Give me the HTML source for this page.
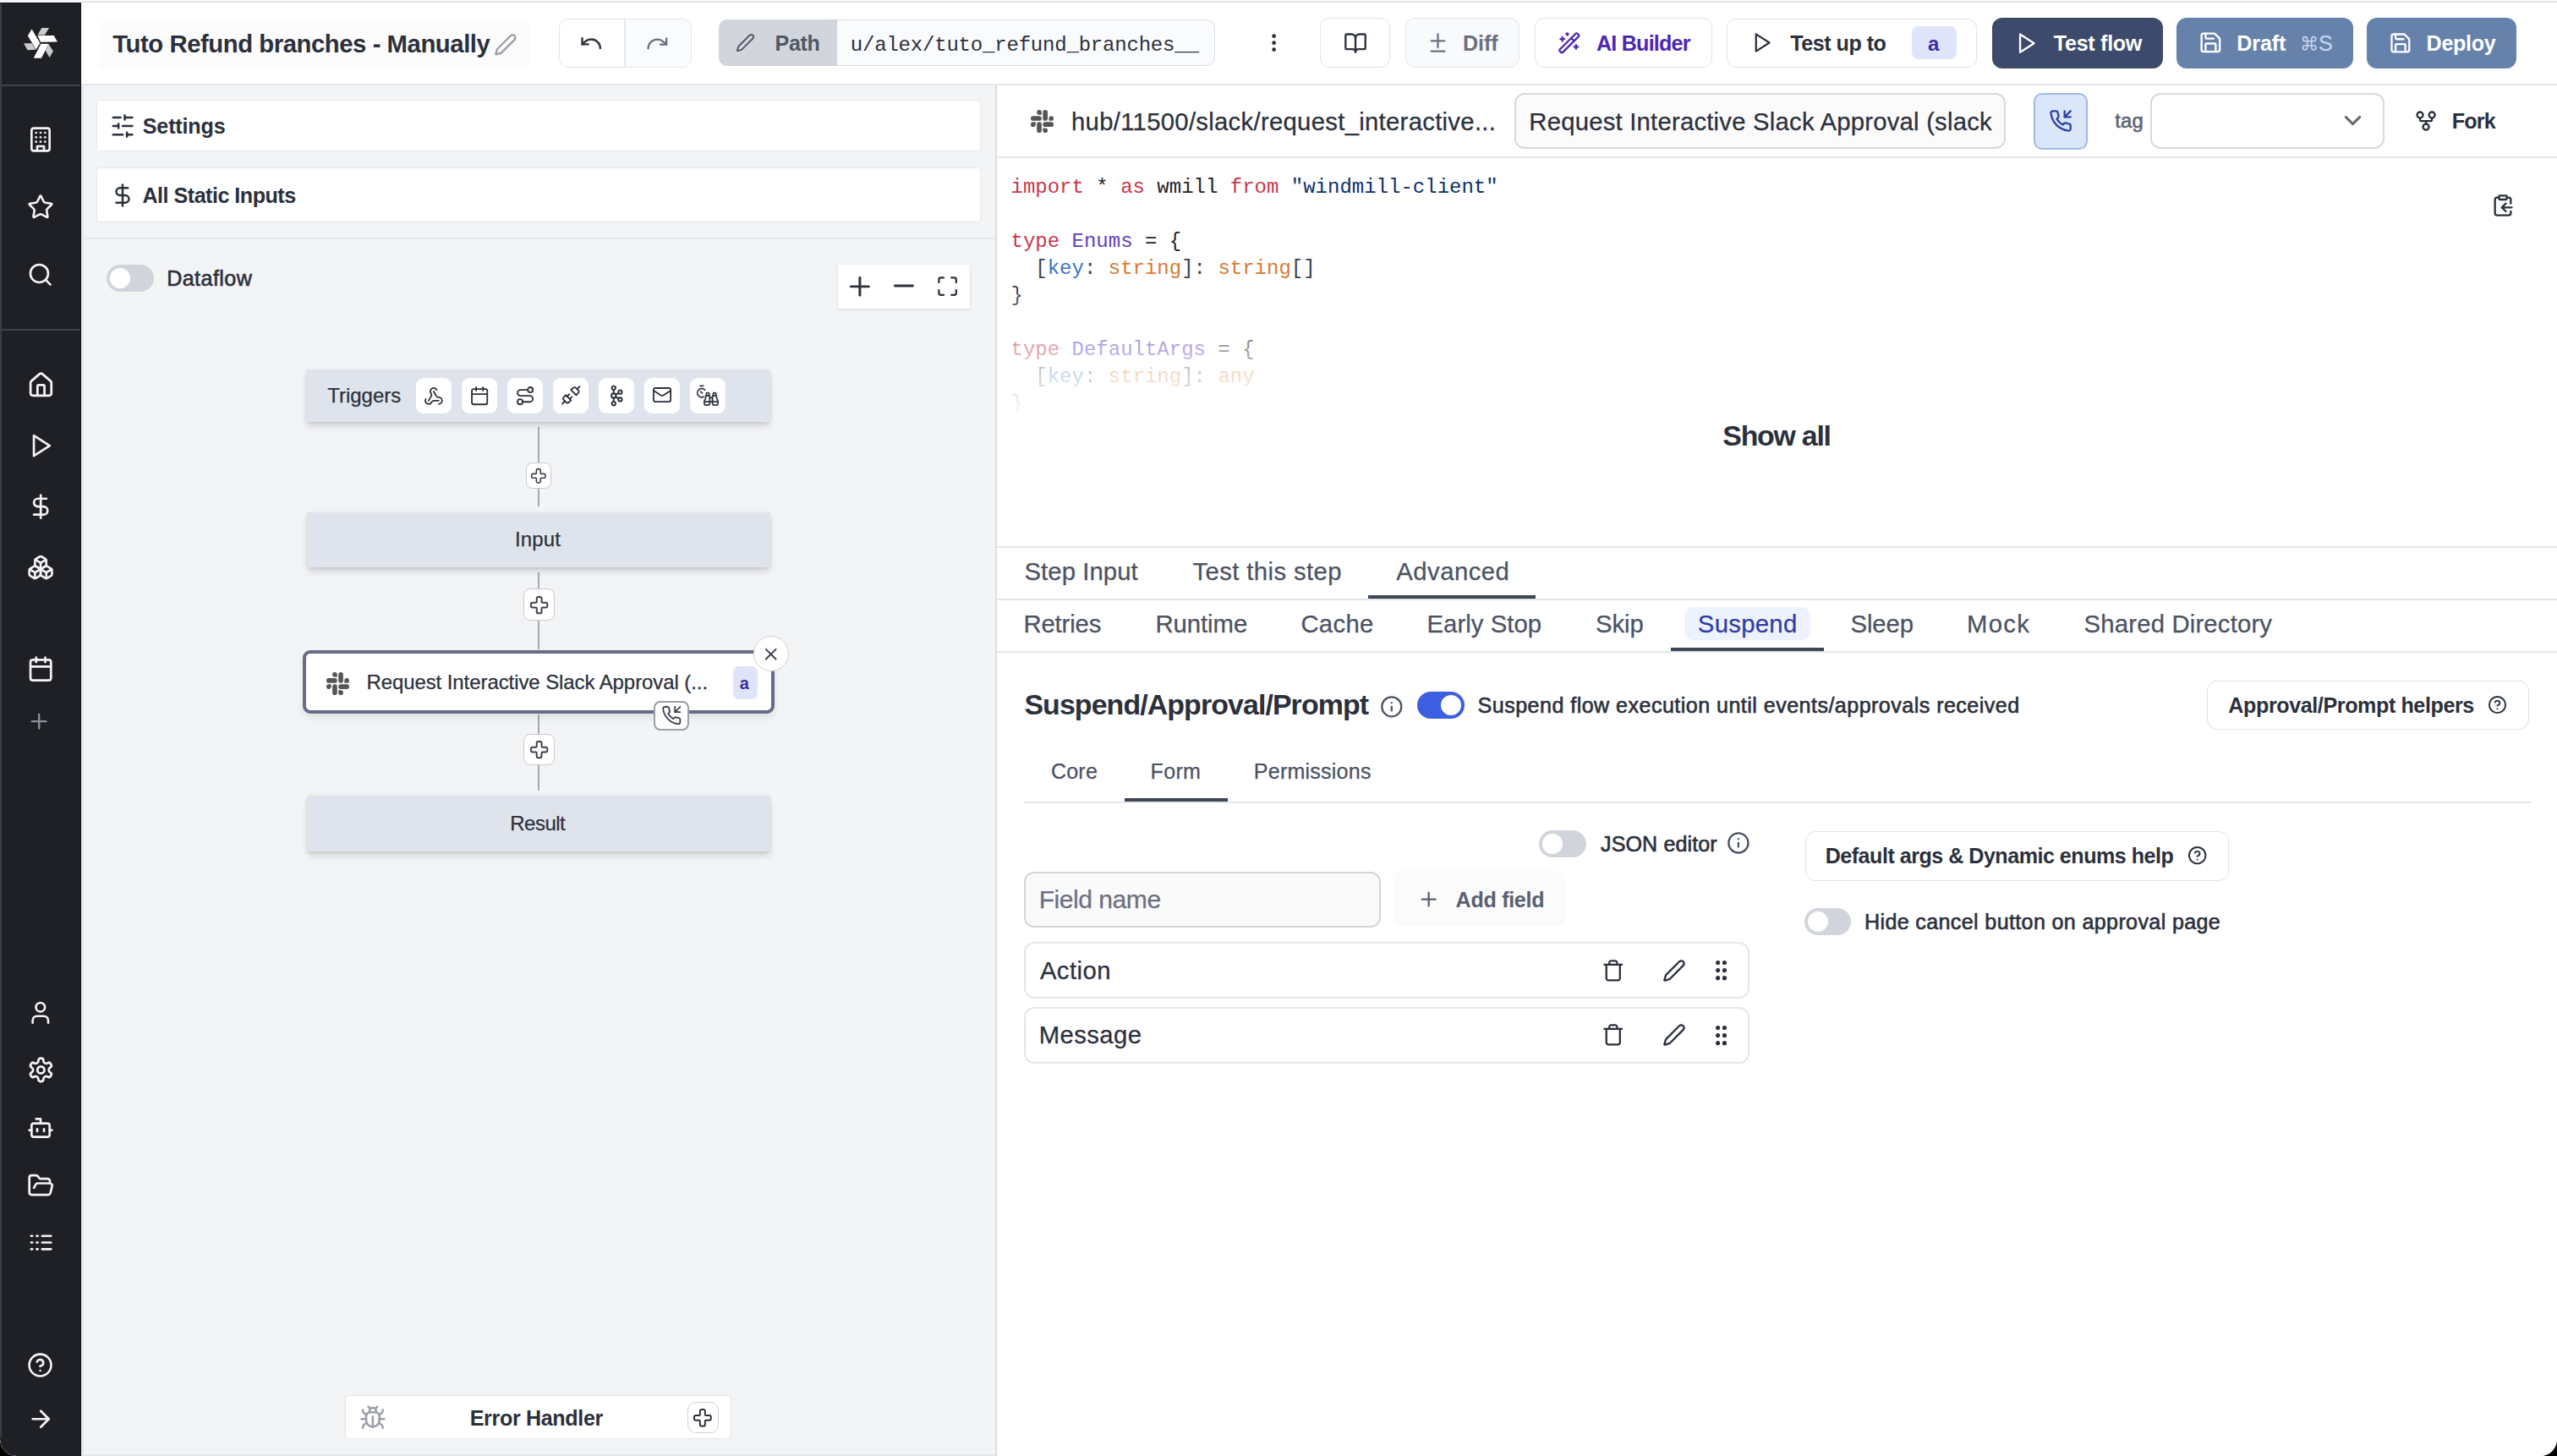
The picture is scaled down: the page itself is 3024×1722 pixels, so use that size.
<!DOCTYPE html>
<html><head><meta charset="utf-8"><title>Windmill flow editor</title>
<style>
html,body{margin:0;padding:0;background:#000;}
body{width:3024px;height:1722px;overflow:hidden;position:relative;font-family:'Liberation Sans',sans-serif;}
#w{position:absolute;left:0;top:0;width:3024px;height:1722px;background:#fff;border-radius:0 0 20px 20px;overflow:hidden;}
#w>div,#w>svg{position:absolute;}
.t{white-space:pre;}
@media (max-width:1700px){html{zoom:0.5;}}
</style></head><body><div id="w">
<div style="left:0px;top:0px;width:3024px;height:3px;background:#f7f7f9"></div>
<div style="left:96px;top:2px;width:2928px;height:1px;background:#d6d6da"></div>
<div style="left:0px;top:3px;width:96px;height:1719px;background:#1f2025;border-bottom-left-radius:20px"></div>
<div style="left:0px;top:3px;width:96px;height:1px;background:#0f1013"></div>
<div style="left:0px;top:4px;width:1.5px;height:1696px;background:#3b3c42"></div>
<div style="left:94.5px;top:4px;width:1.5px;height:1718px;background:#131418"></div>
<div style="left:0px;top:100px;width:95px;height:2px;background:#404148"></div>
<div style="left:0px;top:389px;width:95px;height:2px;background:#404148"></div>
<svg style="left:0;top:0;width:96px;height:100px" viewBox="0 0 96 100"><polygon fill="#c9cacd" points="44.5,41.3 49.3,33.1 58,33.1 52.9,41.6"/><polygon fill="#c9cacd" points="28.1,51.2 37.6,51.2 42.3,58.8 32.5,59.3"/><polygon fill="#c9cacd" points="53.7,59.9 57.5,52 62.9,60.5 58.6,68.1"/><polygon fill="#ffffff" points="44.4,42.1 63.7,42.1 67.9,49.6 48,49.8"/><polygon fill="#ffffff" points="32.8,42.2 37.6,34.6 47.4,51.1 42.6,58.5"/><polygon fill="#ffffff" points="39.8,68.8 49,68.8 57.5,52 48.3,51.7"/></svg>
<svg style="left:32.01px;top:149.16px;width:31.98px;height:31.98px" viewBox="0 0 24 24" fill="none" stroke="#f4f4f5" stroke-width="2" stroke-linecap="round" stroke-linejoin="round"><rect width="16" height="20" x="4" y="2" rx="2" ry="2"/><path d="M9 22v-4h6v4"/><path d="M8 6h.01"/><path d="M16 6h.01"/><path d="M12 6h.01"/><path d="M12 10h.01"/><path d="M12 14h.01"/><path d="M16 10h.01"/><path d="M16 14h.01"/><path d="M8 10h.01"/><path d="M8 14h.01"/></svg>
<svg style="left:32.02px;top:228.83px;width:31.86px;height:31.86px" viewBox="0 0 24 24" fill="none" stroke="#f4f4f5" stroke-width="2" stroke-linecap="round" stroke-linejoin="round"><path d="M11.525 2.295a.53.53 0 0 1 .95 0l2.31 4.679a2.123 2.123 0 0 0 1.595 1.16l5.166.756a.53.53 0 0 1 .294.904l-3.736 3.638a2.123 2.123 0 0 0-.611 1.878l.882 5.14a.53.53 0 0 1-.771.56l-4.618-2.428a2.122 2.122 0 0 0-1.973 0L6.396 21.01a.53.53 0 0 1-.77-.56l.881-5.139a2.122 2.122 0 0 0-.611-1.879L2.16 9.795a.53.53 0 0 1 .294-.906l5.165-.755a2.122 2.122 0 0 0 1.597-1.16z"/></svg>
<svg style="left:32.05px;top:309.2px;width:31.5px;height:31.5px" viewBox="0 0 24 24" fill="none" stroke="#f4f4f5" stroke-width="2" stroke-linecap="round" stroke-linejoin="round"><circle cx="11" cy="11" r="8"/><path d="m21 21-4.3-4.3"/></svg>
<svg style="left:31.7px;top:438.58px;width:32.9px;height:32.9px" viewBox="0 0 24 24" fill="none" stroke="#f4f4f5" stroke-width="2" stroke-linecap="round" stroke-linejoin="round"><path d="M15 21v-8a1 1 0 0 0-1-1h-4a1 1 0 0 0-1 1v8"/><path d="M3 10a2 2 0 0 1 .709-1.528l7-5.999a2 2 0 0 1 2.582 0l7 5.999A2 2 0 0 1 21 10v9a2 2 0 0 1-2 2H5a2 2 0 0 1-2-2z"/></svg>
<svg style="left:31.81px;top:511.3px;width:32.2px;height:32.2px" viewBox="0 0 24 24" fill="none" stroke="#f4f4f5" stroke-width="2" stroke-linecap="round" stroke-linejoin="round"><polygon points="6 3 20 12 6 21 6 3"/></svg>
<svg style="left:31.91px;top:582.91px;width:32.38px;height:32.38px" viewBox="0 0 24 24" fill="none" stroke="#f4f4f5" stroke-width="2" stroke-linecap="round" stroke-linejoin="round"><line x1="12" x2="12" y1="2" y2="22"/><path d="M17 5H9.5a3.5 3.5 0 0 0 0 7h5a3.5 3.5 0 0 1 0 7H6"/></svg>
<svg style="left:32.04px;top:654.74px;width:32.12px;height:32.12px" viewBox="0 0 24 24" fill="none" stroke="#f4f4f5" stroke-width="2" stroke-linecap="round" stroke-linejoin="round"><path d="M2.97 12.92A2 2 0 0 0 2 14.63v3.24a2 2 0 0 0 .97 1.71l3 1.8a2 2 0 0 0 2.06 0L12 19v-5.5l-5-3-4.03 2.42Z"/><path d="m7 16.5-4.74-2.85"/><path d="m7 16.5 5-3"/><path d="M7 16.5v5.17"/><path d="M12 13.5V19l3.97 2.38a2 2 0 0 0 2.06 0l3-1.8a2 2 0 0 0 .97-1.71v-3.24a2 2 0 0 0-.97-1.71L17 10.5l-5 3Z"/><path d="m17 16.5-5-3"/><path d="m17 16.5 4.74-2.85"/><path d="M17 16.5v5.17"/><path d="M7.97 4.42A2 2 0 0 0 7 6.13v4.37l5 3 5-3V6.13a2 2 0 0 0-.97-1.71l-3-1.8a2 2 0 0 0-2.06 0l-3 1.8Z"/><path d="M12 8 7.26 5.15"/><path d="m12 8 4.74-2.85"/><path d="M12 13.5V8"/></svg>
<svg style="left:31.99px;top:775.34px;width:32.32px;height:32.32px" viewBox="0 0 24 24" fill="none" stroke="#f4f4f5" stroke-width="2" stroke-linecap="round" stroke-linejoin="round"><path d="M8 2v4"/><path d="M16 2v4"/><rect width="18" height="18" x="3" y="4" rx="2"/><path d="M3 10h18"/></svg>
<svg style="left:31.85px;top:1182.3px;width:31.6px;height:31.6px" viewBox="0 0 24 24" fill="none" stroke="#f4f4f5" stroke-width="2" stroke-linecap="round" stroke-linejoin="round"><circle cx="12" cy="7" r="4"/><path d="M19 21v-2a4 4 0 0 0-4-4H9a4 4 0 0 0-4 4v2"/></svg>
<svg style="left:31.52px;top:1249.27px;width:32.75px;height:32.75px" viewBox="0 0 24 24" fill="none" stroke="#f4f4f5" stroke-width="2" stroke-linecap="round" stroke-linejoin="round"><path d="M12.22 2h-.44a2 2 0 0 0-2 2v.18a2 2 0 0 1-1 1.73l-.43.25a2 2 0 0 1-2 0l-.15-.08a2 2 0 0 0-2.73.73l-.22.38a2 2 0 0 0 .73 2.73l.15.1a2 2 0 0 1 1 1.72v.51a2 2 0 0 1-1 1.74l-.15.09a2 2 0 0 0-.73 2.73l.22.38a2 2 0 0 0 2.73.73l.15-.08a2 2 0 0 1 2 0l.43.25a2 2 0 0 1 1 1.73V20a2 2 0 0 0 2 2h.44a2 2 0 0 0 2-2v-.18a2 2 0 0 1 1-1.73l.43-.25a2 2 0 0 1 2 0l.15.08a2 2 0 0 0 2.73-.73l.22-.39a2 2 0 0 0-.73-2.73l-.15-.08a2 2 0 0 1-1-1.74v-.5a2 2 0 0 1 1-1.74l.15-.09a2 2 0 0 0 .73-2.73l-.22-.38a2 2 0 0 0-2.73-.73l-.15.08a2 2 0 0 1-2 0l-.43-.25a2 2 0 0 1-1-1.73V4a2 2 0 0 0-2-2z"/><circle cx="12" cy="12" r="3"/></svg>
<svg style="left:31.88px;top:1317.68px;width:32.04px;height:32.04px" viewBox="0 0 24 24" fill="none" stroke="#f4f4f5" stroke-width="2" stroke-linecap="round" stroke-linejoin="round"><path d="M12 8V4H8"/><rect width="16" height="12" x="4" y="8" rx="2"/><path d="M2 14h2"/><path d="M20 14h2"/><path d="M15 13v2"/><path d="M9 13v2"/></svg>
<svg style="left:31.63px;top:1386.06px;width:32.44px;height:32.44px" viewBox="0 0 24 24" fill="none" stroke="#f4f4f5" stroke-width="2" stroke-linecap="round" stroke-linejoin="round"><path d="m6 14 1.5-2.9A2 2 0 0 1 9.24 10H20a2 2 0 0 1 1.94 2.5l-1.54 6a2 2 0 0 1-1.95 1.5H4a2 2 0 0 1-2-2V5a2 2 0 0 1 2-2h3.9a2 2 0 0 1 1.69.9l.81 1.2a2 2 0 0 0 1.67.9H18a2 2 0 0 1 2 2v2"/></svg>
<svg style="left:32.53px;top:1454.43px;width:31.15px;height:31.15px" viewBox="0 0 24 24" fill="none" stroke="#f4f4f5" stroke-width="2" stroke-linecap="round" stroke-linejoin="round"><path d="M13 12h8"/><path d="M13 18h8"/><path d="M13 6h8"/><path d="M3 12h1"/><path d="M3 18h1"/><path d="M3 6h1"/><path d="M8 12h1"/><path d="M8 18h1"/><path d="M8 6h1"/></svg>
<svg style="left:32.4px;top:1598.9px;width:31.09px;height:31.09px" viewBox="0 0 24 24" fill="none" stroke="#f4f4f5" stroke-width="2" stroke-linecap="round" stroke-linejoin="round"><circle cx="12" cy="12" r="10"/><path d="M9.09 9a3 3 0 0 1 5.83 1c0 2-3 3-3 3"/><path d="M12 17h.01"/></svg>
<svg style="left:31.91px;top:1661.56px;width:32.47px;height:32.47px" viewBox="0 0 24 24" fill="none" stroke="#f4f4f5" stroke-width="2" stroke-linecap="round" stroke-linejoin="round"><path d="M5 12h14"/><path d="m12 5 7 7-7 7"/></svg>
<svg style="left:32.11px;top:839.26px;width:28.27px;height:28.27px" viewBox="0 0 24 24" fill="none" stroke="#8e9097" stroke-width="2" stroke-linecap="round" stroke-linejoin="round"><path d="M5 12h14"/><path d="M12 5v14"/></svg>
<div style="left:96px;top:3px;width:2928px;height:96px;background:#fff"></div>
<div style="left:96px;top:99px;width:2928px;height:2px;background:#e4e6e9"></div>
<div style="left:116.5px;top:24px;width:510.5px;height:57.5px;background:#fcfcfd;border-radius:6px"></div>
<div class="t" style="left:133.3px;top:37px;font-family:'Liberation Sans',sans-serif;font-size:29.3px;line-height:29.3px;letter-spacing:-0.453px;color:#2b303b;font-weight:700;">Tuto Refund branches - Manually</div>
<svg style="left:583.87px;top:39.12px;width:27.76px;height:27.76px" viewBox="0 0 24 24" fill="none" stroke="#9b9ea4" stroke-width="2" stroke-linecap="round" stroke-linejoin="round"><path d="M21.174 6.812a1 1 0 0 0-3.986-3.987L3.842 16.174a2 2 0 0 0-.5.83l-1.321 4.352a.5.5 0 0 0 .623.622l4.353-1.32a2 2 0 0 0 .83-.497z"/></svg>
<div style="left:661.3px;top:21.6px;width:156.3px;height:58.6px;border:1.5px solid #e3e5e8;border-radius:11px;background:#fff;box-sizing:border-box"></div>
<div style="left:739.5px;top:23px;width:76.5px;height:56px;background:#fafbfc;border-radius:0 10px 10px 0"></div>
<div style="left:738.2px;top:22.5px;width:1.5px;height:57px;background:#e6e8eb"></div>
<svg style="left:685.3px;top:36.7px;width:28.4px;height:28.4px" viewBox="0 0 24 24" fill="none" stroke="#2b303b" stroke-width="2" stroke-linecap="round" stroke-linejoin="round"><path d="M3 7v6h6"/><path d="M21 17a9 9 0 0 0-9-9 9 9 0 0 0-6 2.3L3 13"/></svg>
<svg style="left:763.42px;top:36.52px;width:28.76px;height:28.76px" viewBox="0 0 24 24" fill="none" stroke="#6b7080" stroke-width="2" stroke-linecap="round" stroke-linejoin="round"><path d="M21 7v6h-6"/><path d="M3 17a9 9 0 0 1 9-9 9 9 0 0 1 6 2.3l3 2.7"/></svg>
<div style="left:850px;top:23.2px;width:586.5px;height:55.3px;border:1.5px solid #d9dbdf;border-radius:10px;background:#fafbfc;box-sizing:border-box"></div>
<div style="left:850px;top:23.2px;width:140px;height:55.3px;background:#d2d6dc;border-radius:10px 0 0 10px"></div>
<svg style="left:869.99px;top:39.39px;width:23.02px;height:23.02px" viewBox="0 0 24 24" fill="none" stroke="#505766" stroke-width="2" stroke-linecap="round" stroke-linejoin="round"><path d="M21.174 6.812a1 1 0 0 0-3.986-3.987L3.842 16.174a2 2 0 0 0-.5.83l-1.321 4.352a.5.5 0 0 0 .623.622l4.353-1.32a2 2 0 0 0 .83-.497z"/></svg>
<div class="t" style="left:916.6px;top:39.2px;font-family:'Liberation Sans',sans-serif;font-size:25.1px;line-height:25.1px;letter-spacing:-0.4px;color:#505766;font-weight:700;">Path</div>
<div class="t" style="left:1005.8px;top:42px;font-family:'Liberation Mono',monospace;font-size:24px;line-height:24px;letter-spacing:-0.2px;color:#2b303b;">u/alex/tuto_refund_branches__</div>
<svg style="left:1493.35px;top:37.25px;width:27.3px;height:27.3px" viewBox="0 0 24 24" fill="none" stroke="#2b303b" stroke-width="2.2" stroke-linecap="round" stroke-linejoin="round"><circle cx="12" cy="12" r="1"/><circle cx="12" cy="5" r="1"/><circle cx="12" cy="19" r="1"/></svg>
<div style="left:1561.4px;top:21.4px;width:82.4px;height:58.6px;border:1.5px solid #e3e5e8;border-radius:11px;background:#fff;box-sizing:border-box"></div>
<svg style="left:1588.96px;top:36.91px;width:28.09px;height:28.09px" viewBox="0 0 24 24" fill="none" stroke="#2b303b" stroke-width="2" stroke-linecap="round" stroke-linejoin="round"><path d="M12 7v14"/><path d="M3 18a1 1 0 0 1-1-1V4a1 1 0 0 1 1-1h5a4 4 0 0 1 4 4 4 4 0 0 1 4-4h5a1 1 0 0 1 1 1v13a1 1 0 0 1-1 1h-6a3 3 0 0 0-3 3 3 3 0 0 0-3-3z"/></svg>
<div style="left:1661.5px;top:21.4px;width:135.5px;height:58.6px;border:1.5px solid #e3e5e8;border-radius:11px;background:#f9fafb;box-sizing:border-box"></div>
<svg style="left:1687.47px;top:37.37px;width:27.06px;height:27.06px" viewBox="0 0 24 24" fill="none" stroke="#6b7080" stroke-width="2" stroke-linecap="round" stroke-linejoin="round"><path d="M12 3v14"/><path d="M5 10h14"/><path d="M5 21h14"/></svg>
<div class="t" style="left:1730px;top:39.2px;font-family:'Liberation Sans',sans-serif;font-size:25.1px;line-height:25.1px;letter-spacing:-0.067px;color:#6b7080;font-weight:700;">Diff</div>
<div style="left:1814.6px;top:21.4px;width:210.8px;height:58.6px;border:1.5px solid #e3e5e8;border-radius:11px;background:#fff;box-sizing:border-box"></div>
<svg style="left:1841.92px;top:37.07px;width:27.65px;height:27.65px" viewBox="0 0 24 24" fill="none" stroke="#4d27b3" stroke-width="2" stroke-linecap="round" stroke-linejoin="round"><path d="m21.64 3.64-1.28-1.28a1.21 1.21 0 0 0-1.72 0L2.36 18.64a1.21 1.21 0 0 0 0 1.72l1.28 1.28a1.2 1.2 0 0 0 1.72 0L21.64 5.36a1.2 1.2 0 0 0 0-1.72"/><path d="m14 7 3 3"/><path d="M5 6v4"/><path d="M19 14v4"/><path d="M10 2v2"/><path d="M7 8H3"/><path d="M21 16h-4"/><path d="M11 3H9"/></svg>
<div class="t" style="left:1888px;top:39.2px;font-family:'Liberation Sans',sans-serif;font-size:25.1px;line-height:25.1px;letter-spacing:-0.778px;color:#4d27b3;font-weight:700;">AI Builder</div>
<div style="left:2042px;top:21.6px;width:296.4px;height:58px;border:1.5px solid #e3e5e8;border-radius:11px;background:#fff;box-sizing:border-box"></div>
<svg style="left:2070.34px;top:37.37px;width:27.06px;height:27.06px" viewBox="0 0 24 24" fill="none" stroke="#2b303b" stroke-width="2" stroke-linecap="round" stroke-linejoin="round"><polygon points="6 3 20 12 6 21 6 3"/></svg>
<div class="t" style="left:2117.3px;top:38.7px;font-family:'Liberation Sans',sans-serif;font-size:25.1px;line-height:25.1px;letter-spacing:-0.489px;color:#2b303b;font-weight:700;">Test up to</div>
<div style="left:2261px;top:31.3px;width:52.5px;height:39.1px;background:#e0e4fb;border-radius:8px"></div>
<div class="t" style="left:2280px;top:39.7px;font-family:'Liberation Sans',sans-serif;font-size:24px;line-height:24px;letter-spacing:0.0px;color:#3a2fa0;font-weight:700;">a</div>
<div style="left:2356px;top:21px;width:201.8px;height:59.7px;background:#3d4a6b;border-radius:12px"></div>
<svg style="left:2381.82px;top:36.75px;width:28.3px;height:28.3px" viewBox="0 0 24 24" fill="none" stroke="#ffffff" stroke-width="2" stroke-linecap="round" stroke-linejoin="round"><polygon points="6 3 20 12 6 21 6 3"/></svg>
<div class="t" style="left:2428.8px;top:38.7px;font-family:'Liberation Sans',sans-serif;font-size:25.1px;line-height:25.1px;letter-spacing:-0.288px;color:#ffffff;font-weight:700;">Test flow</div>
<div style="left:2574px;top:21.1px;width:209px;height:59.5px;background:#6682ab;border-radius:12px"></div>
<svg style="left:2599.63px;top:36.48px;width:28.74px;height:28.74px" viewBox="0 0 24 24" fill="none" stroke="#ffffff" stroke-width="2" stroke-linecap="round" stroke-linejoin="round"><path d="M15.2 3a2 2 0 0 1 1.4.6l3.8 3.8a2 2 0 0 1 .6 1.4V19a2 2 0 0 1-2 2H5a2 2 0 0 1-2-2V5a2 2 0 0 1 2-2z"/><path d="M17 21v-7a1 1 0 0 0-1-1H8a1 1 0 0 0-1 1v7"/><path d="M7 3v4a1 1 0 0 0 1 1h7"/></svg>
<div class="t" style="left:2645.3px;top:38.7px;font-family:'Liberation Sans',sans-serif;font-size:25.1px;line-height:25.1px;letter-spacing:-0.15px;color:#ffffff;font-weight:700;">Draft</div>
<svg style="left:2721.3px;top:41.3px;width:20.4px;height:20.4px" viewBox="0 0 24 24" fill="none" stroke="#c5d3ec" stroke-width="2" stroke-linecap="round" stroke-linejoin="round"><path d="M15 6v12a3 3 0 1 0 3-3H6a3 3 0 1 0 3 3V6a3 3 0 1 0-3 3h12a3 3 0 1 0-3-3"/></svg>
<div class="t" style="left:2742px;top:38.7px;font-family:'Liberation Sans',sans-serif;font-size:25.1px;line-height:25.1px;letter-spacing:0.0px;color:#c5d3ec;-webkit-text-stroke:0.25px currentColor;">S</div>
<div style="left:2799px;top:20.9px;width:177px;height:59.9px;background:#6682ab;border-radius:12px"></div>
<svg style="left:2825.26px;top:37.11px;width:27.78px;height:27.78px" viewBox="0 0 24 24" fill="none" stroke="#ffffff" stroke-width="2" stroke-linecap="round" stroke-linejoin="round"><path d="M15.2 3a2 2 0 0 1 1.4.6l3.8 3.8a2 2 0 0 1 .6 1.4V19a2 2 0 0 1-2 2H5a2 2 0 0 1-2-2V5a2 2 0 0 1 2-2z"/><path d="M17 21v-7a1 1 0 0 0-1-1H8a1 1 0 0 0-1 1v7"/><path d="M7 3v4a1 1 0 0 0 1 1h7"/></svg>
<div class="t" style="left:2869.6px;top:38.8px;font-family:'Liberation Sans',sans-serif;font-size:25.1px;line-height:25.1px;letter-spacing:-0.32px;color:#ffffff;font-weight:700;">Deploy</div>
<div style="left:96px;top:101px;width:1081px;height:1621px;background:#f3f4f6"></div>
<div style="left:96px;top:101px;width:4px;height:1621px;background:linear-gradient(90deg,#e2e3e6,#eff0f2)"></div>
<div style="left:1177px;top:101px;width:2px;height:1621px;background:#dcdee2"></div>
<div style="left:113.5px;top:118px;width:1046px;height:61.2px;background:#fff;border:1.5px solid #e6e8eb;border-radius:3px;box-sizing:border-box"></div>
<svg style="left:130.21px;top:133.91px;width:30.19px;height:30.19px" viewBox="0 0 24 24" fill="none" stroke="#2b303b" stroke-width="2" stroke-linecap="round" stroke-linejoin="round"><line x1="21" x2="14" y1="4" y2="4"/><line x1="10" x2="3" y1="4" y2="4"/><line x1="21" x2="12" y1="12" y2="12"/><line x1="8" x2="3" y1="12" y2="12"/><line x1="21" x2="16" y1="20" y2="20"/><line x1="12" x2="3" y1="20" y2="20"/><line x1="14" x2="14" y1="2" y2="6"/><line x1="8" x2="8" y1="10" y2="14"/><line x1="16" x2="16" y1="18" y2="22"/></svg>
<div class="t" style="left:168.8px;top:136.8px;font-family:'Liberation Sans',sans-serif;font-size:25.1px;line-height:25.1px;letter-spacing:-0.171px;color:#2b303b;font-weight:700;">Settings</div>
<div style="left:113.5px;top:198.3px;width:1046px;height:64.5px;background:#fff;border:1.5px solid #e6e8eb;border-radius:3px;box-sizing:border-box"></div>
<svg style="left:130.31px;top:216.11px;width:29.98px;height:29.98px" viewBox="0 0 24 24" fill="none" stroke="#2b303b" stroke-width="2" stroke-linecap="round" stroke-linejoin="round"><line x1="12" x2="12" y1="2" y2="22"/><path d="M17 5H9.5a3.5 3.5 0 0 0 0 7h5a3.5 3.5 0 0 1 0 7H6"/></svg>
<div class="t" style="left:168.5px;top:219px;font-family:'Liberation Sans',sans-serif;font-size:25.1px;line-height:25.1px;letter-spacing:-0.5px;color:#2b303b;font-weight:700;">All Static Inputs</div>
<div style="left:96px;top:281px;width:1081px;height:2px;background:#e4e6e9"></div>
<div style="left:126.2px;top:313px;width:55.7px;height:31.5px;background:#d1d5db;border-radius:16px"></div>
<div style="left:129.8px;top:316.8px;width:23.9px;height:24.1px;background:#fff;border-radius:50%"></div>
<div class="t" style="left:197.2px;top:316.9px;font-family:'Liberation Sans',sans-serif;font-size:25.1px;line-height:25.1px;letter-spacing:0.429px;color:#2b303b;-webkit-text-stroke:0.6px currentColor;">Dataflow</div>
<div style="left:991px;top:313px;width:156px;height:52px;background:#fff;box-shadow:0 1px 3px rgba(0,0,0,.12)"></div>
<svg style="left:999.06px;top:321.01px;width:35.78px;height:35.78px" viewBox="0 0 24 24" fill="none" stroke="#2b303b" stroke-width="2" stroke-linecap="round" stroke-linejoin="round"><path d="M5 12h14"/><path d="M12 5v14"/></svg>
<svg style="left:1051.03px;top:320.37px;width:35.85px;height:35.85px" viewBox="0 0 24 24" fill="none" stroke="#2b303b" stroke-width="2" stroke-linecap="round" stroke-linejoin="round"><path d="M5 12h14"/></svg>
<svg style="left:1107.33px;top:325.33px;width:27.24px;height:27.24px" viewBox="0 0 24 24" fill="none" stroke="#2b303b" stroke-width="2" stroke-linecap="round" stroke-linejoin="round"><path d="M8 3H5a2 2 0 0 0-2 2v3"/><path d="M21 8V5a2 2 0 0 0-2-2h-3"/><path d="M3 16v3a2 2 0 0 0 2 2h3"/><path d="M16 21h3a2 2 0 0 0 2-2v-3"/></svg>
<div style="left:636px;top:504.9px;width:2px;height:42.4px;background:#a6a9b0"></div>
<div style="left:636px;top:578.3px;width:2px;height:20.7px;background:#a6a9b0"></div>
<div style="left:636px;top:676.7px;width:2px;height:19.7px;background:#a6a9b0"></div>
<div style="left:636px;top:733.9px;width:2px;height:34.1px;background:#a6a9b0"></div>
<div style="left:636px;top:845px;width:2px;height:22.7px;background:#a6a9b0"></div>
<div style="left:636px;top:905px;width:2px;height:30px;background:#a6a9b0"></div>
<div style="left:362.3px;top:437.3px;width:549.1px;height:61.6px;background:#dfe4ec;box-shadow:0 6px 8px -1px rgba(0,0,0,.13),0 2px 4px -1px rgba(0,0,0,.07),0 0 5px rgba(0,0,0,.05);border-radius:2px"></div>
<div class="t" style="left:387.3px;top:456px;font-family:'Liberation Sans',sans-serif;font-size:24px;line-height:24px;letter-spacing:-0.029px;color:#2b303b;-webkit-text-stroke:0.25px currentColor;">Triggers</div>
<div style="left:492.2px;top:447px;width:41.4px;height:42px;background:#fff;border-radius:9px"></div>
<svg style="left:501.19px;top:456.54px;width:23.82px;height:23.82px" viewBox="0 0 24 24" fill="none" stroke="#2b303b" stroke-width="1.8" stroke-linecap="round" stroke-linejoin="round"><path d="M18 16.98h-5.99c-1.1 0-1.95.94-2.48 1.9A4 4 0 0 1 2 17c.01-.7.2-1.4.57-2"/><path d="m6 17 3.13-5.78c.53-.97.1-2.18-.5-3.1a4 4 0 1 1 6.89-4.06"/><path d="m12 6 3.13 5.73C15.66 12.7 16.9 13 18 13a4 4 0 0 1 0 8"/></svg>
<div style="left:546.23px;top:447px;width:41.4px;height:42px;background:#fff;border-radius:9px"></div>
<svg style="left:554.86px;top:455.81px;width:24.29px;height:24.29px" viewBox="0 0 24 24" fill="none" stroke="#2b303b" stroke-width="1.8" stroke-linecap="round" stroke-linejoin="round"><path d="M8 2v4"/><path d="M16 2v4"/><rect width="18" height="18" x="3" y="4" rx="2"/><path d="M3 10h18"/></svg>
<div style="left:600.26px;top:447px;width:41.4px;height:42px;background:#fff;border-radius:9px"></div>
<svg style="left:608.86px;top:455.81px;width:24.29px;height:24.29px" viewBox="0 0 24 24" fill="none" stroke="#2b303b" stroke-width="1.8" stroke-linecap="round" stroke-linejoin="round"><circle cx="6" cy="19" r="3"/><path d="M9 19h8.5a3.5 3.5 0 0 0 0-7h-11a3.5 3.5 0 0 1 0-7H15"/><circle cx="18" cy="5" r="3"/></svg>
<div style="left:654.29px;top:447px;width:41.4px;height:42px;background:#fff;border-radius:9px"></div>
<svg style="left:662.67px;top:455.27px;width:24.55px;height:24.55px" viewBox="0 0 24 24" fill="none" stroke="#2b303b" stroke-width="1.8" stroke-linecap="round" stroke-linejoin="round"><path d="m19 5 3-3"/><path d="m2 22 3-3"/><path d="M6.3 20.3a2.4 2.4 0 0 0 3.4 0L12 18l-6-6-2.3 2.3a2.4 2.4 0 0 0 0 3.4Z"/><path d="M7.5 13.5 10 11"/><path d="M10.5 16.5 13 14"/><path d="m12 6 6 6 2.3-2.3a2.4 2.4 0 0 0 0-3.4l-2.6-2.6a2.4 2.4 0 0 0-3.4 0Z"/></svg>
<div style="left:708.32px;top:447px;width:41.4px;height:42px;background:#fff;border-radius:9px"></div>
<svg style="left:715.62px;top:455.04px;width:26.12px;height:26.12px" viewBox="0 0 24 24" fill="none" stroke="#2b303b" stroke-width="1.8" stroke-linecap="round" stroke-linejoin="round"><circle cx="9" cy="3.5" r="2"/><circle cx="9" cy="12" r="2.5"/><circle cx="9" cy="20.5" r="2"/><circle cx="16" cy="8" r="2"/><circle cx="16" cy="16" r="2"/><path d="M9 5.5v4M9 14.5v4M11.2 10.8l3-1.8M11.2 13.2l3 1.8"/></svg>
<div style="left:762.35px;top:447px;width:41.4px;height:42px;background:#fff;border-radius:9px"></div>
<svg style="left:770.78px;top:455.43px;width:24.14px;height:24.14px" viewBox="0 0 24 24" fill="none" stroke="#2b303b" stroke-width="1.8" stroke-linecap="round" stroke-linejoin="round"><rect width="20" height="16" x="2" y="4" rx="2"/><path d="m22 7-8.97 5.7a1.94 1.94 0 0 1-2.06 0L2 7"/></svg>
<div style="left:816.38px;top:447px;width:41.4px;height:42px;background:#fff;border-radius:9px"></div>
<svg style="left:0;top:0;width:3024px;height:1722px;overflow:visible" viewBox="0 0 3024 1722" fill="none" stroke="#2b303b" stroke-width="1.7" stroke-linecap="round" stroke-linejoin="round"><path d="M828.1 456.4H831.7"/><path d="M833.6 461.2A5.1 5.1 0 1 0 832.2 469.2"/><path d="M828.6 463.1L830.6 464.8"/><g transform="translate(831.3 462.2) scale(0.81)" stroke-width="2.1"><path d="M10 10h4"/><path d="M19 7V4a1 1 0 0 0-1-1h-2a1 1 0 0 0-1 1v3"/><path d="M20 21a2 2 0 0 0 2-2v-3.851c0-1.39-2-2.962-2-4.829V8a1 1 0 0 0-1-1h-4a1 1 0 0 0-1 1v11a2 2 0 0 0 2 2z"/><path d="M22 16H2"/><path d="M4 21a2 2 0 0 1-2-2v-3.851c0-1.39 2-2.962 2-4.829V8a1 1 0 0 1 1-1h4a1 1 0 0 1 1 1v11a2 2 0 0 1-2 2z"/><path d="M9 7V4a1 1 0 0 0-1-1H6a1 1 0 0 0-1 1v3"/></g></svg>
<div style="left:621.7px;top:547.3px;width:30.5px;height:31px;background:#fff;border:1.5px solid #c9cbd0;border-radius:8px;box-sizing:border-box"></div>
<svg style="left:627.18px;top:553.18px;width:19.64px;height:19.64px" viewBox="0 0 24 24" fill="none" stroke="#3a3f4a" stroke-width="2" stroke-linecap="round" stroke-linejoin="round"><path d="M4 9a2 2 0 0 0-2 2v2a2 2 0 0 0 2 2h4a1 1 0 0 1 1 1v4a2 2 0 0 0 2 2h2a2 2 0 0 0 2-2v-4a1 1 0 0 1 1-1h4a2 2 0 0 0 2-2v-2a2 2 0 0 0-2-2h-4a1 1 0 0 1-1-1V4a2 2 0 0 0-2-2h-2a2 2 0 0 0-2 2v4a1 1 0 0 1-1 1z"/></svg>
<div style="left:362.9px;top:605.5px;width:547.9px;height:65.1px;background:#dfe4ec;box-shadow:0 6px 8px -1px rgba(0,0,0,.13),0 2px 4px -1px rgba(0,0,0,.07),0 0 5px rgba(0,0,0,.05);border-radius:2px"></div>
<div class="t" style="left:609px;top:626.2px;font-family:'Liberation Sans',sans-serif;font-size:24px;line-height:24px;letter-spacing:0.15px;color:#2b303b;-webkit-text-stroke:0.25px currentColor;">Input</div>
<div style="left:618.7px;top:696.4px;width:37.5px;height:37.5px;background:#fff;border:1.5px solid #c9cbd0;border-radius:8px;box-sizing:border-box"></div>
<svg style="left:626.05px;top:704.2px;width:23.29px;height:23.29px" viewBox="0 0 24 24" fill="none" stroke="#3a3f4a" stroke-width="2" stroke-linecap="round" stroke-linejoin="round"><path d="M4 9a2 2 0 0 0-2 2v2a2 2 0 0 0 2 2h4a1 1 0 0 1 1 1v4a2 2 0 0 0 2 2h2a2 2 0 0 0 2-2v-4a1 1 0 0 1 1-1h4a2 2 0 0 0 2-2v-2a2 2 0 0 0-2-2h-4a1 1 0 0 1-1-1V4a2 2 0 0 0-2-2h-2a2 2 0 0 0-2 2v4a1 1 0 0 1-1 1z"/></svg>
<div style="left:358.2px;top:768.8px;width:557.5px;height:75.7px;background:#fff;border:4px solid #676c87;border-radius:9px;box-sizing:border-box;box-shadow:0 5px 8px rgba(0,0,0,.08)"></div>
<svg style="left:385.8px;top:794.6px;width:27px;height:27px" viewBox="0 0 24 24" fill="#555659"><path d="M5.042 15.165a2.528 2.528 0 0 1-2.52 2.523A2.528 2.528 0 0 1 0 15.165a2.527 2.527 0 0 1 2.522-2.52h2.52v2.52zM6.313 15.165a2.527 2.527 0 0 1 2.521-2.52 2.527 2.527 0 0 1 2.521 2.52v6.313A2.528 2.528 0 0 1 8.834 24a2.528 2.528 0 0 1-2.521-2.522v-6.313zM8.834 5.042a2.528 2.528 0 0 1-2.521-2.52A2.528 2.528 0 0 1 8.834 0a2.528 2.528 0 0 1 2.521 2.522v2.52H8.834zM8.834 6.313a2.528 2.528 0 0 1 2.521 2.521 2.528 2.528 0 0 1-2.521 2.521H2.522A2.528 2.528 0 0 1 0 8.834a2.528 2.528 0 0 1 2.522-2.521h6.312zM18.956 8.834a2.528 2.528 0 0 1 2.522-2.521A2.528 2.528 0 0 1 24 8.834a2.528 2.528 0 0 1-2.522 2.521h-2.522V8.834zM17.688 8.834a2.528 2.528 0 0 1-2.523 2.521 2.527 2.527 0 0 1-2.52-2.521V2.522A2.527 2.527 0 0 1 15.165 0a2.528 2.528 0 0 1 2.523 2.522v6.312zM15.165 18.956a2.528 2.528 0 0 1 2.523 2.522A2.528 2.528 0 0 1 15.165 24a2.527 2.527 0 0 1-2.52-2.522v-2.522h2.52zM15.165 17.688a2.527 2.527 0 0 1-2.52-2.523 2.526 2.526 0 0 1 2.52-2.52h6.313A2.527 2.527 0 0 1 24 15.165a2.528 2.528 0 0 1-2.522 2.523h-6.313z"/></svg>
<div class="t" style="left:433.4px;top:794.5px;font-family:'Liberation Sans',sans-serif;font-size:24px;line-height:24px;letter-spacing:-0.084px;color:#2b303b;-webkit-text-stroke:0.25px currentColor;">Request Interactive Slack Approval (...</div>
<div style="left:867px;top:787.5px;width:28.8px;height:39.3px;background:#e0e4fb;border-radius:7px"></div>
<div class="t" style="left:874.8px;top:797.5px;font-family:'Liberation Sans',sans-serif;font-size:20px;line-height:20px;letter-spacing:0.0px;color:#3a2fa0;font-weight:700;">a</div>
<div style="left:891px;top:752px;width:42px;height:42px;background:#fff;border:1.5px solid #cfd1d5;border-radius:50%;box-sizing:border-box"></div>
<svg style="left:900.15px;top:761.5px;width:23.4px;height:23.4px" viewBox="0 0 24 24" fill="none" stroke="#3a3f4a" stroke-width="2" stroke-linecap="round" stroke-linejoin="round"><path d="M18 6 6 18"/><path d="m6 6 12 12"/></svg>
<div style="left:772.6px;top:829.2px;width:42.8px;height:34.6px;background:#fff;border:2px solid #9a9ea6;border-radius:8px;box-sizing:border-box"></div>
<svg style="left:781.95px;top:834.3px;width:24.38px;height:24.38px" viewBox="0 0 24 24" fill="none" stroke="#3a3f4a" stroke-width="1.8" stroke-linecap="round" stroke-linejoin="round"><polyline points="16 2 16 8 22 8"/><line x1="22" x2="16" y1="2" y2="8"/><path d="M22 16.92v3a2 2 0 0 1-2.18 2 19.79 19.79 0 0 1-8.63-3.07 19.5 19.5 0 0 1-6-6 19.79 19.79 0 0 1-3.07-8.67A2 2 0 0 1 4.11 2h3a2 2 0 0 1 2 1.72 12.84 12.84 0 0 0 .7 2.81 2 2 0 0 1-.45 2.11L8.09 9.91a16 16 0 0 0 6 6l1.27-1.27a2 2 0 0 1 2.11-.45 12.84 12.84 0 0 0 2.81.7A2 2 0 0 1 22 16.92z"/></svg>
<div style="left:618.7px;top:867.7px;width:37.5px;height:37.3px;background:#fff;border:1.5px solid #c9cbd0;border-radius:8px;box-sizing:border-box"></div>
<svg style="left:626.08px;top:874.88px;width:23.24px;height:23.24px" viewBox="0 0 24 24" fill="none" stroke="#3a3f4a" stroke-width="2" stroke-linecap="round" stroke-linejoin="round"><path d="M4 9a2 2 0 0 0-2 2v2a2 2 0 0 0 2 2h4a1 1 0 0 1 1 1v4a2 2 0 0 0 2 2h2a2 2 0 0 0 2-2v-4a1 1 0 0 1 1-1h4a2 2 0 0 0 2-2v-2a2 2 0 0 0-2-2h-4a1 1 0 0 1-1-1V4a2 2 0 0 0-2-2h-2a2 2 0 0 0-2 2v4a1 1 0 0 1-1 1z"/></svg>
<div style="left:362.9px;top:941px;width:547.9px;height:65.7px;background:#dfe4ec;box-shadow:0 6px 8px -1px rgba(0,0,0,.13),0 2px 4px -1px rgba(0,0,0,.07),0 0 5px rgba(0,0,0,.05);border-radius:2px"></div>
<div class="t" style="left:603.3px;top:962px;font-family:'Liberation Sans',sans-serif;font-size:24px;line-height:24px;letter-spacing:-0.52px;color:#2b303b;-webkit-text-stroke:0.25px currentColor;">Result</div>
<div style="left:408.4px;top:1649.8px;width:457.1px;height:52.5px;background:#fff;border:1.5px solid #e1e3e6;border-radius:4px;box-sizing:border-box"></div>
<svg style="left:424.97px;top:1661.18px;width:31.76px;height:31.76px" viewBox="0 0 24 24" fill="none" stroke="#9ca0a8" stroke-width="2" stroke-linecap="round" stroke-linejoin="round"><path d="m8 2 1.88 1.88"/><path d="M14.12 3.88 16 2"/><path d="M9 7.13v-1a3.003 3.003 0 1 1 6 0v1"/><path d="M12 20c-3.3 0-6-2.7-6-6v-3a4 4 0 0 1 4-4h4a4 4 0 0 1 4 4v3c0 3.3-2.7 6-6 6"/><path d="M12 20v-9"/><path d="M6.53 9C4.6 8.8 3 7.1 3 5"/><path d="M6 13H2"/><path d="M3 21c0-2.1 1.7-3.9 3.8-4"/><path d="M20.97 5c0 2.1-1.6 3.8-3.5 4"/><path d="M22 13h-4"/><path d="M17.2 17c2.1.1 3.8 1.9 3.8 4"/></svg>
<div class="t" style="left:555.7px;top:1665px;font-family:'Liberation Sans',sans-serif;font-size:25.1px;line-height:25.1px;letter-spacing:-0.35px;color:#2b303b;font-weight:700;">Error Handler</div>
<div style="left:812.6px;top:1657.8px;width:37.9px;height:37.6px;background:#fff;border:1.5px solid #cfd1d5;border-radius:10px;box-sizing:border-box"></div>
<svg style="left:819.39px;top:1665.14px;width:23.73px;height:23.73px" viewBox="0 0 24 24" fill="none" stroke="#2b303b" stroke-width="2" stroke-linecap="round" stroke-linejoin="round"><path d="M4 9a2 2 0 0 0-2 2v2a2 2 0 0 0 2 2h4a1 1 0 0 1 1 1v4a2 2 0 0 0 2 2h2a2 2 0 0 0 2-2v-4a1 1 0 0 1 1-1h4a2 2 0 0 0 2-2v-2a2 2 0 0 0-2-2h-4a1 1 0 0 1-1-1V4a2 2 0 0 0-2-2h-2a2 2 0 0 0-2 2v4a1 1 0 0 1-1 1z"/></svg>
<div style="left:96px;top:1720px;width:1081px;height:2px;background:#e5e7eb"></div>
<div style="left:1179px;top:101px;width:1845px;height:1621px;background:#fff"></div>
<div style="left:1179px;top:185px;width:1845px;height:2px;background:#e4e6e9"></div>
<svg style="left:1218.5px;top:130.3px;width:27.2px;height:27.2px" viewBox="0 0 24 24" fill="#555659"><path d="M5.042 15.165a2.528 2.528 0 0 1-2.52 2.523A2.528 2.528 0 0 1 0 15.165a2.527 2.527 0 0 1 2.522-2.52h2.52v2.52zM6.313 15.165a2.527 2.527 0 0 1 2.521-2.52 2.527 2.527 0 0 1 2.521 2.52v6.313A2.528 2.528 0 0 1 8.834 24a2.528 2.528 0 0 1-2.521-2.522v-6.313zM8.834 5.042a2.528 2.528 0 0 1-2.521-2.52A2.528 2.528 0 0 1 8.834 0a2.528 2.528 0 0 1 2.521 2.522v2.52H8.834zM8.834 6.313a2.528 2.528 0 0 1 2.521 2.521 2.528 2.528 0 0 1-2.521 2.521H2.522A2.528 2.528 0 0 1 0 8.834a2.528 2.528 0 0 1 2.522-2.521h6.312zM18.956 8.834a2.528 2.528 0 0 1 2.522-2.521A2.528 2.528 0 0 1 24 8.834a2.528 2.528 0 0 1-2.522 2.521h-2.522V8.834zM17.688 8.834a2.528 2.528 0 0 1-2.523 2.521 2.527 2.527 0 0 1-2.52-2.521V2.522A2.527 2.527 0 0 1 15.165 0a2.528 2.528 0 0 1 2.523 2.522v6.312zM15.165 18.956a2.528 2.528 0 0 1 2.523 2.522A2.528 2.528 0 0 1 15.165 24a2.527 2.527 0 0 1-2.52-2.522v-2.522h2.52zM15.165 17.688a2.527 2.527 0 0 1-2.52-2.523 2.526 2.526 0 0 1 2.52-2.52h6.313A2.527 2.527 0 0 1 24 15.165a2.528 2.528 0 0 1-2.522 2.523h-6.313z"/></svg>
<div class="t" style="left:1267px;top:129px;font-family:'Liberation Sans',sans-serif;font-size:29.3px;line-height:29.3px;letter-spacing:0.286px;color:#2b303b;-webkit-text-stroke:0.25px currentColor;">hub/11500/slack/request_interactive...</div>
<div style="left:1791px;top:109.6px;width:581.2px;height:66.4px;background:#fbfbfc;border:2px solid #d7d9dd;border-radius:12px;box-sizing:border-box;overflow:hidden"></div>
<div class="t" style="left:1808.3px;top:129px;font-family:'Liberation Sans',sans-serif;font-size:29.3px;line-height:29.3px;letter-spacing:0.21px;color:#2b303b;-webkit-text-stroke:0.25px currentColor;">Request Interactive Slack Approval (slack</div>
<div style="left:2405.3px;top:109.5px;width:63.4px;height:67px;background:#dce6f9;border:2px solid #9db9ec;border-radius:10px;box-sizing:border-box"></div>
<svg style="left:2423.11px;top:129.02px;width:28.04px;height:28.04px" viewBox="0 0 24 24" fill="none" stroke="#2a44a8" stroke-width="2" stroke-linecap="round" stroke-linejoin="round"><polyline points="16 2 16 8 22 8"/><line x1="22" x2="16" y1="2" y2="8"/><path d="M22 16.92v3a2 2 0 0 1-2.18 2 19.79 19.79 0 0 1-8.63-3.07 19.5 19.5 0 0 1-6-6 19.79 19.79 0 0 1-3.07-8.67A2 2 0 0 1 4.11 2h3a2 2 0 0 1 2 1.72 12.84 12.84 0 0 0 .7 2.81 2 2 0 0 1-.45 2.11L8.09 9.91a16 16 0 0 0 6 6l1.27-1.27a2 2 0 0 1 2.11-.45 12.84 12.84 0 0 0 2.81.7A2 2 0 0 1 22 16.92z"/></svg>
<div class="t" style="left:2501.2px;top:130.8px;font-family:'Liberation Sans',sans-serif;font-size:23.8px;line-height:23.8px;letter-spacing:0.2px;color:#5d6372;-webkit-text-stroke:0.6px currentColor;">tag</div>
<div style="left:2542.8px;top:109.6px;width:277.6px;height:66.4px;background:#fff;border:2px solid #d7d9dd;border-radius:12px;box-sizing:border-box"></div>
<svg style="left:2765.5px;top:126.3px;width:33px;height:33px" viewBox="0 0 24 24" fill="none" stroke="#6b6d73" stroke-width="2.2" stroke-linecap="round" stroke-linejoin="round"><path d="m6 9 6 6 6-6"/></svg>
<svg style="left:2854.83px;top:128.78px;width:28.14px;height:28.14px" viewBox="0 0 24 24" fill="none" stroke="#2b303b" stroke-width="2" stroke-linecap="round" stroke-linejoin="round"><circle cx="12" cy="18" r="3"/><circle cx="6" cy="6" r="3"/><circle cx="18" cy="6" r="3"/><path d="M18 9v2c0 .6-.4 1-1 1H7c-.6 0-1-.4-1-1V9"/><path d="M12 12v3"/></svg>
<div class="t" style="left:2899.8px;top:130.6px;font-family:'Liberation Sans',sans-serif;font-size:25.1px;line-height:25.1px;letter-spacing:-0.8px;color:#2b303b;font-weight:700;">Fork</div>
<svg style="left:2946.17px;top:228.95px;width:27.99px;height:27.99px" viewBox="0 0 24 24" fill="none" stroke="#2b303b" stroke-width="2" stroke-linecap="round" stroke-linejoin="round"><rect width="8" height="4" x="8" y="2" rx="1" ry="1"/><path d="M8 4H6a2 2 0 0 0-2 2v14a2 2 0 0 0 2 2h12a2 2 0 0 0 2-2v-2"/><path d="M16 4h2a2 2 0 0 1 2 2v4"/><path d="M21 14H11"/><path d="m15 10-4 4 4 4"/></svg>
<div class="t" style="left:1195.5px;top:209.8px;font-family:'Liberation Mono',monospace;font-size:24px;line-height:24px;letter-spacing:0px"><span style="color:#c8374b">import</span><span style="color:#1f2328"> * </span><span style="color:#c8374b">as</span><span style="color:#1f2328"> wmill </span><span style="color:#c8374b">from</span><span style="color:#1f2328"> </span><span style="color:#0b3069">"windmill-client"</span></div>
<div class="t" style="left:1195.5px;top:273.8px;font-family:'Liberation Mono',monospace;font-size:24px;line-height:24px;letter-spacing:0px"><span style="color:#c8374b">type</span><span style="color:#1f2328"> </span><span style="color:#6541bf">Enums</span><span style="color:#1f2328"> = {</span></div>
<div class="t" style="left:1195.5px;top:305.8px;font-family:'Liberation Mono',monospace;font-size:24px;line-height:24px;letter-spacing:0px"><span style="color:#3b3f47">  [</span><span style="color:#3974c6">key</span><span style="color:#3b3f47">: </span><span style="color:#d87b35">string</span><span style="color:#3b3f47">]: </span><span style="color:#d87b35">string</span><span style="color:#3b3f47">[]</span></div>
<div class="t" style="left:1195.5px;top:337.8px;font-family:'Liberation Mono',monospace;font-size:24px;line-height:24px;letter-spacing:0px"><span style="color:#3b3f47">}</span></div>
<div class="t" style="left:1195.5px;top:401.8px;font-family:'Liberation Mono',monospace;font-size:24px;line-height:24px;letter-spacing:0px"><span style="color:#c8374b">type</span><span style="color:#1f2328"> </span><span style="color:#6541bf">DefaultArgs</span><span style="color:#1f2328"> = {</span></div>
<div class="t" style="left:1195.5px;top:433.8px;font-family:'Liberation Mono',monospace;font-size:24px;line-height:24px;letter-spacing:0px"><span style="color:#3b3f47">  [</span><span style="color:#3974c6">key</span><span style="color:#3b3f47">: </span><span style="color:#d87b35">string</span><span style="color:#3b3f47">]: </span><span style="color:#d87b35">any</span></div>
<div class="t" style="left:1195.5px;top:465.8px;font-family:'Liberation Mono',monospace;font-size:24px;line-height:24px;letter-spacing:0px"><span style="color:#3b3f47">}</span></div>
<div style="left:1179px;top:335px;width:1845px;height:157px;background:linear-gradient(180deg,rgba(255,255,255,0) 0%,rgba(255,255,255,.55) 50%,#fff 100%)"></div>
<div class="t" style="left:2037.3px;top:499.1px;font-family:'Liberation Sans',sans-serif;font-size:33.9px;line-height:33.9px;letter-spacing:-1.257px;color:#2b303b;font-weight:700;">Show all</div>
<div style="left:1179px;top:646px;width:1845px;height:2px;background:#e4e6e9"></div>
<div style="left:1179px;top:708px;width:1845px;height:2px;background:#e4e6e9"></div>
<div class="t" style="left:1211.5px;top:660.7px;font-family:'Liberation Sans',sans-serif;font-size:29.3px;line-height:29.3px;letter-spacing:0.067px;color:#4b5262;-webkit-text-stroke:0.25px currentColor;">Step Input</div>
<div class="t" style="left:1410.5px;top:660.7px;font-family:'Liberation Sans',sans-serif;font-size:29.3px;line-height:29.3px;letter-spacing:0.385px;color:#4b5262;-webkit-text-stroke:0.25px currentColor;">Test this step</div>
<div class="t" style="left:1651.2px;top:660.5px;font-family:'Liberation Sans',sans-serif;font-size:29.3px;line-height:29.3px;letter-spacing:0.486px;color:#4b5262;-webkit-text-stroke:0.25px currentColor;">Advanced</div>
<div style="left:1618px;top:704px;width:198px;height:4px;background:#3d4556"></div>
<div style="left:1179px;top:770px;width:1845px;height:2px;background:#e4e6e9"></div>
<div style="left:1992.2px;top:718.2px;width:148.7px;height:39.1px;background:#eef2fc;border-radius:10px"></div>
<div class="t" style="left:1210.5px;top:722.7px;font-family:'Liberation Sans',sans-serif;font-size:29.3px;line-height:29.3px;letter-spacing:-0.167px;color:#4b5262;-webkit-text-stroke:0.25px currentColor;">Retries</div>
<div class="t" style="left:1366.5px;top:722.7px;font-family:'Liberation Sans',sans-serif;font-size:29.3px;line-height:29.3px;letter-spacing:-0.067px;color:#4b5262;-webkit-text-stroke:0.25px currentColor;">Runtime</div>
<div class="t" style="left:1538.4px;top:722.7px;font-family:'Liberation Sans',sans-serif;font-size:29.3px;line-height:29.3px;letter-spacing:0.3px;color:#4b5262;-webkit-text-stroke:0.25px currentColor;">Cache</div>
<div class="t" style="left:1687.5px;top:722.7px;font-family:'Liberation Sans',sans-serif;font-size:29.3px;line-height:29.3px;letter-spacing:0.044px;color:#4b5262;-webkit-text-stroke:0.25px currentColor;">Early Stop</div>
<div class="t" style="left:1886.9px;top:722.7px;font-family:'Liberation Sans',sans-serif;font-size:29.3px;line-height:29.3px;letter-spacing:0.0px;color:#4b5262;-webkit-text-stroke:0.25px currentColor;">Skip</div>
<div class="t" style="left:2007.8px;top:722.9px;font-family:'Liberation Sans',sans-serif;font-size:29.3px;line-height:29.3px;letter-spacing:0.3px;color:#2e3fa3;-webkit-text-stroke:0.25px currentColor;">Suspend</div>
<div class="t" style="left:2188.4px;top:722.7px;font-family:'Liberation Sans',sans-serif;font-size:29.3px;line-height:29.3px;letter-spacing:-0.05px;color:#4b5262;-webkit-text-stroke:0.25px currentColor;">Sleep</div>
<div class="t" style="left:2326px;top:722.7px;font-family:'Liberation Sans',sans-serif;font-size:29.3px;line-height:29.3px;letter-spacing:1.333px;color:#4b5262;-webkit-text-stroke:0.25px currentColor;">Mock</div>
<div class="t" style="left:2464.6px;top:722.7px;font-family:'Liberation Sans',sans-serif;font-size:29.3px;line-height:29.3px;letter-spacing:0.173px;color:#4b5262;-webkit-text-stroke:0.25px currentColor;">Shared Directory</div>
<div style="left:1976px;top:766px;width:181px;height:4px;background:#3d4556"></div>
<div class="t" style="left:1211.4px;top:816.8px;font-family:'Liberation Sans',sans-serif;font-size:33.9px;line-height:33.9px;letter-spacing:-0.9px;color:#2b303b;font-weight:700;">Suspend/Approval/Prompt</div>
<svg style="left:1632.02px;top:822.07px;width:27.65px;height:27.65px" viewBox="0 0 24 24" fill="none" stroke="#4b5262" stroke-width="2" stroke-linecap="round" stroke-linejoin="round"><circle cx="12" cy="12" r="10"/><path d="M12 16v-4"/><path d="M12 8h.01"/></svg>
<div style="left:1676px;top:818px;width:55.8px;height:32px;background:#3b5fe0;border-radius:16px"></div>
<div style="left:1703.9px;top:821.8px;width:24.3px;height:24.4px;background:#fff;border-radius:50%"></div>
<div class="t" style="left:1747.6px;top:821.5px;font-family:'Liberation Sans',sans-serif;font-size:25.1px;line-height:25.1px;letter-spacing:0.453px;color:#2b303b;-webkit-text-stroke:0.6px currentColor;">Suspend flow execution until events/approvals received</div>
<div style="left:2609.7px;top:804.7px;width:381.3px;height:57.9px;background:#fff;border:1.5px solid #e1e3e6;border-radius:12px;box-sizing:border-box"></div>
<div class="t" style="left:2635.3px;top:821.7px;font-family:'Liberation Sans',sans-serif;font-size:25.1px;line-height:25.1px;letter-spacing:-0.4px;color:#2b303b;font-weight:700;">Approval/Prompt helpers</div>
<svg style="left:2942.44px;top:822.24px;width:23.02px;height:23.02px" viewBox="0 0 24 24" fill="none" stroke="#2b303b" stroke-width="2" stroke-linecap="round" stroke-linejoin="round"><circle cx="12" cy="12" r="10"/><path d="M9.09 9a3 3 0 0 1 5.83 1c0 2-3 3-3 3"/><path d="M12 17h.01"/></svg>
<div class="t" style="left:1242.9px;top:900px;font-family:'Liberation Sans',sans-serif;font-size:25.1px;line-height:25.1px;letter-spacing:0.2px;color:#4b5262;-webkit-text-stroke:0.25px currentColor;">Core</div>
<div class="t" style="left:1360.6px;top:900px;font-family:'Liberation Sans',sans-serif;font-size:25.1px;line-height:25.1px;letter-spacing:0.267px;color:#4b5262;-webkit-text-stroke:0.25px currentColor;">Form</div>
<div class="t" style="left:1482.8px;top:900px;font-family:'Liberation Sans',sans-serif;font-size:25.1px;line-height:25.1px;letter-spacing:0.2px;color:#4b5262;-webkit-text-stroke:0.25px currentColor;">Permissions</div>
<div style="left:1211.2px;top:948px;width:1781.5px;height:2px;background:#e4e6e9"></div>
<div style="left:1330.3px;top:944px;width:121.8px;height:4px;background:#3d4556"></div>
<div style="left:1820.3px;top:982.3px;width:55.5px;height:31.5px;background:#d1d5db;border-radius:16px"></div>
<div style="left:1823.9px;top:985.9px;width:24.1px;height:24.3px;background:#fff;border-radius:50%"></div>
<div class="t" style="left:1893px;top:985.7px;font-family:'Liberation Sans',sans-serif;font-size:25.1px;line-height:25.1px;letter-spacing:0.1px;color:#2b303b;-webkit-text-stroke:0.6px currentColor;">JSON editor</div>
<svg style="left:2041.99px;top:982.89px;width:27.82px;height:27.82px" viewBox="0 0 24 24" fill="none" stroke="#4b5262" stroke-width="2" stroke-linecap="round" stroke-linejoin="round"><circle cx="12" cy="12" r="10"/><path d="M12 16v-4"/><path d="M12 8h.01"/></svg>
<div style="left:2134.8px;top:982.6px;width:501.2px;height:59.1px;background:#fff;border:1.5px solid #e1e3e6;border-radius:12px;box-sizing:border-box"></div>
<div class="t" style="left:2158.7px;top:999.9px;font-family:'Liberation Sans',sans-serif;font-size:25.1px;line-height:25.1px;letter-spacing:-0.5px;color:#2b303b;font-weight:700;">Default args &amp; Dynamic enums help</div>
<svg style="left:2587.33px;top:1000.23px;width:23.35px;height:23.35px" viewBox="0 0 24 24" fill="none" stroke="#2b303b" stroke-width="2" stroke-linecap="round" stroke-linejoin="round"><circle cx="12" cy="12" r="10"/><path d="M9.09 9a3 3 0 0 1 5.83 1c0 2-3 3-3 3"/><path d="M12 17h.01"/></svg>
<div style="left:2134.2px;top:1074px;width:55.3px;height:31.8px;background:#d1d5db;border-radius:16px"></div>
<div style="left:2137.8px;top:1077.8px;width:23.9px;height:24.2px;background:#fff;border-radius:50%"></div>
<div class="t" style="left:2205px;top:1077.7px;font-family:'Liberation Sans',sans-serif;font-size:25.1px;line-height:25.1px;letter-spacing:0.353px;color:#2b303b;-webkit-text-stroke:0.6px currentColor;">Hide cancel button on approval page</div>
<div style="left:1211.4px;top:1030.6px;width:422.1px;height:66.8px;background:#fafafa;border:2px solid #d3d6da;border-radius:12px;box-sizing:border-box"></div>
<div class="t" style="left:1228.7px;top:1049.2px;font-family:'Liberation Sans',sans-serif;font-size:30.1px;line-height:30.1px;letter-spacing:-0.489px;color:#6b7080;-webkit-text-stroke:0.25px currentColor;">Field name</div>
<div style="left:1647.5px;top:1030.3px;width:203.5px;height:64.7px;background:#fbfbfc;border-radius:10px"></div>
<svg style="left:1676.3px;top:1050.3px;width:27.3px;height:27.3px" viewBox="0 0 24 24" fill="none" stroke="#5a6070" stroke-width="2" stroke-linecap="round" stroke-linejoin="round"><path d="M5 12h14"/><path d="M12 5v14"/></svg>
<div class="t" style="left:1721.6px;top:1051.7px;font-family:'Liberation Sans',sans-serif;font-size:25.1px;line-height:25.1px;letter-spacing:-0.3px;color:#5a6070;font-weight:700;">Add field</div>
<div style="left:1211.4px;top:1114.4px;width:857.9px;height:66.9px;background:#fff;border:2px solid #e5e7eb;border-radius:12px;box-sizing:border-box"></div>
<div class="t" style="left:1229.9px;top:1133px;font-family:'Liberation Sans',sans-serif;font-size:29.3px;line-height:29.3px;letter-spacing:0.44px;color:#2b303b;-webkit-text-stroke:0.25px currentColor;">Action</div>
<svg style="left:1894px;top:1134.05px;width:27.6px;height:27.6px" viewBox="0 0 24 24" fill="none" stroke="#2b303b" stroke-width="2" stroke-linecap="round" stroke-linejoin="round"><path d="M3 6h18"/><path d="M19 6v14c0 1-1 2-2 2H7c-1 0-2-1-2-2V6"/><path d="M8 6V4c0-1 1-2 2-2h4c1 0 2 1 2 2v2"/></svg>
<svg style="left:1966.01px;top:1133.86px;width:27.98px;height:27.98px" viewBox="0 0 24 24" fill="none" stroke="#2b303b" stroke-width="2" stroke-linecap="round" stroke-linejoin="round"><path d="M21.174 6.812a1 1 0 0 0-3.986-3.987L3.842 16.174a2 2 0 0 0-.5.83l-1.321 4.352a.5.5 0 0 0 .623.622l4.353-1.32a2 2 0 0 0 .83-.497z"/></svg>
<svg style="left:2020.42px;top:1132.37px;width:31.16px;height:31.16px" viewBox="0 0 24 24" fill="none" stroke="#2b303b" stroke-width="2" stroke-linecap="round" stroke-linejoin="round"><circle cx="9" cy="12" r="1"/><circle cx="9" cy="5" r="1"/><circle cx="9" cy="19" r="1"/><circle cx="15" cy="12" r="1"/><circle cx="15" cy="5" r="1"/><circle cx="15" cy="19" r="1"/></svg>
<div style="left:1211.4px;top:1190.7px;width:857.9px;height:66.9px;background:#fff;border:2px solid #e5e7eb;border-radius:12px;box-sizing:border-box"></div>
<div class="t" style="left:1228.7px;top:1209px;font-family:'Liberation Sans',sans-serif;font-size:29.3px;line-height:29.3px;letter-spacing:0.4px;color:#2b303b;-webkit-text-stroke:0.25px currentColor;">Message</div>
<svg style="left:1894px;top:1210.35px;width:27.6px;height:27.6px" viewBox="0 0 24 24" fill="none" stroke="#2b303b" stroke-width="2" stroke-linecap="round" stroke-linejoin="round"><path d="M3 6h18"/><path d="M19 6v14c0 1-1 2-2 2H7c-1 0-2-1-2-2V6"/><path d="M8 6V4c0-1 1-2 2-2h4c1 0 2 1 2 2v2"/></svg>
<svg style="left:1966.01px;top:1210.16px;width:27.98px;height:27.98px" viewBox="0 0 24 24" fill="none" stroke="#2b303b" stroke-width="2" stroke-linecap="round" stroke-linejoin="round"><path d="M21.174 6.812a1 1 0 0 0-3.986-3.987L3.842 16.174a2 2 0 0 0-.5.83l-1.321 4.352a.5.5 0 0 0 .623.622l4.353-1.32a2 2 0 0 0 .83-.497z"/></svg>
<svg style="left:2020.42px;top:1208.67px;width:31.16px;height:31.16px" viewBox="0 0 24 24" fill="none" stroke="#2b303b" stroke-width="2" stroke-linecap="round" stroke-linejoin="round"><circle cx="9" cy="12" r="1"/><circle cx="9" cy="5" r="1"/><circle cx="9" cy="19" r="1"/><circle cx="15" cy="12" r="1"/><circle cx="15" cy="5" r="1"/><circle cx="15" cy="19" r="1"/></svg>
</div></body></html>
